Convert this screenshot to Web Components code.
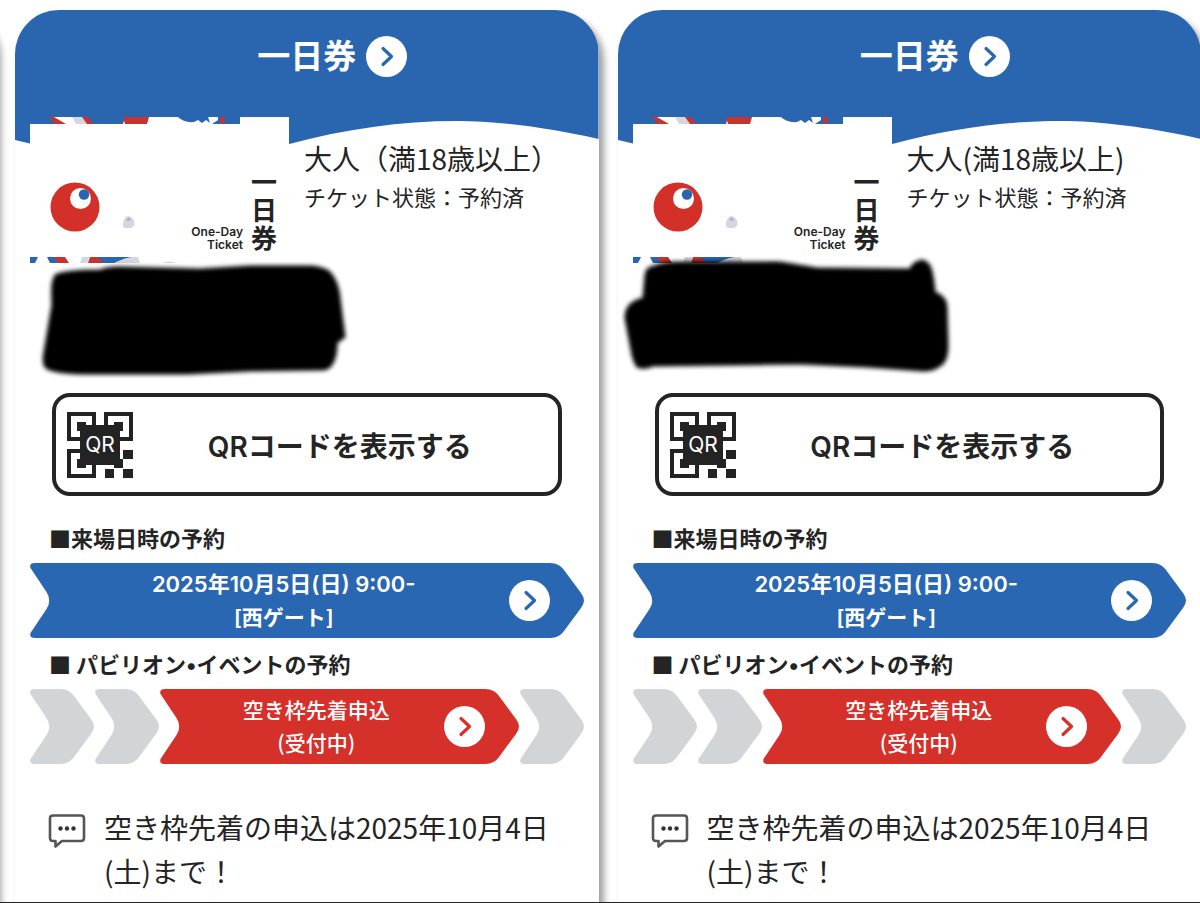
<!DOCTYPE html>
<html lang="ja">

<head>
    <meta charset="UTF-8">
    <meta name="viewport" content="width=device-width, initial-scale=1.0">
    <title>一日券</title>
    <style>
        body {
            background-color: hsl(0, 0%, 100%);
            color: hsl(0, 0%, 14%);
            font-family: 'Noto Sans CJK JP', sans-serif;
            margin: 0;
        }
    </style>
</head>

<body>
    <ticket-list>
        <ticket-card>
            <span slot="category">大人（満18歳以上）</span>
            <ink-mark slot="holder"
                d="M40 15Q50 10 85 10Q92 7 104 7L185 9L235 6H298Q314 8 318 16Q324 25 325 38L330 77L322 83Q322 96 318 103Q314 111 305 110L235 111L172 114H65Q34 113 30 107Q27 102 29 92L37 45Q36 25 38 20Z"></ink-mark>
            <span slot="note">空き枠先着の申込は2025年10月4日(土)まで！</span>
        </ticket-card>
        <ticket-card>
            <span slot="category">大人(満18歳以上)</span>
            <ink-mark slot="holder"
                d="M27 15Q28 7 36 6Q45 2 60 2H162L199 8L292 9Q294 2 304 0Q311 2 313 8Q316 18 317 32Q329 37 329 47L330 85Q330 102 322 106Q316 111 305 111L249 107L182 104L35 106Q26 110 19 107Q16 103 14 95L7 58Q7 42 25 38Z"></ink-mark>
            <span slot="note">空き枠先着の申込は2025年10月4日(土)まで！</span>
        </ticket-card>
    </ticket-list>

    <script>
        class TicketList extends HTMLElement {

            constructor() {
                super()
                this.shadow = this.attachShadow({ mode: 'open' })
            }

            connectedCallback() {
                this.render()
            }

            render() {
                this.shadow.innerHTML =
                    /*html*/
                    `
                    <style>
                        :host {
                            border-bottom: 1px solid hsl(0, 0%, 14%);
                            box-sizing: border-box;
                            display: flex;
                            min-height: 100vh;
                            overflow: hidden;
                            padding-top: 10px;
                        }

                        /* edge of the card that is scrolled out on the left */
                        .previous {
                            border-radius: 0 40px 0 0;
                            box-shadow: 5px 6px 7px hsla(0, 0%, 0%, 0.38);
                            flex: none;
                            margin-left: -44px;
                            width: 40px;
                        }

                        .cards {
                            display: grid;
                            flex: 1;
                            gap: 19px;
                            grid-template-columns: 1fr 1fr;
                            margin: 0 -1px 0 19px;
                        }
                    </style>

                    <div class="previous"></div>
                    <main class="cards"><slot></slot></main>
                    `
            }
        }

        class CircleArrow extends HTMLElement {

            constructor() {
                super()
                this.shadow = this.attachShadow({ mode: 'open' })
            }

            connectedCallback() {
                this.render()
            }

            render() {
                this.shadow.innerHTML =
                    /*html*/
                    `
                    <style>
                        :host {
                            display: block;
                            flex: none;
                            height: 41px;
                            width: 41px;
                        }

                        svg {
                            display: block;
                        }
                    </style>

                    <svg width="41" height="41" viewBox="0 0 41 41" aria-hidden="true">
                        <circle cx="20.5" cy="20.5" r="20.5" fill="#fff"/>
                        <path d="M17 12.5L25.5 20.5L17 28.5" fill="none" stroke="currentColor" stroke-width="3.2" stroke-linecap="round" stroke-linejoin="round"/>
                    </svg>
                    `
            }
        }

        class InkMark extends HTMLElement {

            constructor() {
                super()
                this.shadow = this.attachShadow({ mode: 'open' })
            }

            connectedCallback() {
                this.render()
            }

            render() {
                this.shadow.innerHTML =
                    /*html*/
                    `
                    <style>
                        :host {
                            display: block;
                        }

                        svg {
                            display: block;
                            filter: blur(2px);
                            overflow: visible;
                        }
                    </style>

                    <svg width="340" height="115" viewBox="0 0 340 115" aria-hidden="true">
                        <path d="${this.getAttribute('d')}" fill="#000" stroke="#000" stroke-opacity="0.5" stroke-width="2" stroke-linejoin="round"/>
                    </svg>
                    `
            }
        }

        class RibbonArrow extends HTMLElement {

            constructor() {
                super()
                this.shadow = this.attachShadow({ mode: 'open' })
            }

            connectedCallback() {
                this.render()
            }

            render() {
                const label = this.hasAttribute('step')
                    ? ''
                    : '<span class="label"><slot></slot></span><circle-arrow></circle-arrow>'
                const tag = this.hasAttribute('step') ? 'div' : 'button'

                this.shadow.innerHTML =
                    /*html*/
                    `
                    <style>
                        :host {
                            color: hsl(213, 62%, 43%);
                            display: block;
                            flex: 1;
                        }

                        :host([tone="red"]) {
                            color: hsl(2, 67%, 50%);
                        }

                        :host([step]) {
                            color: hsl(200, 7%, 83%);
                            flex: 0 0 64px;
                        }

                        .ribbon {
                            background: none;
                            border: 0;
                            color: inherit;
                            cursor: pointer;
                            display: flex;
                            font: inherit;
                            height: 75px;
                            padding: 0;
                            width: 100%;
                        }

                        :host([step]) .ribbon {
                            cursor: default;
                        }

                        svg {
                            display: block;
                            fill: currentColor;
                            flex: none;
                        }

                        .body {
                            align-items: center;
                            align-self: stretch;
                            background-color: currentColor;
                            display: flex;
                            flex: 1;
                            padding-left: 9px;
                        }

                        :host([step]) .body {
                            flex: none;
                            padding: 0;
                            width: 10px;
                        }

                        .label {
                            color: hsl(0, 0%, 100%);
                            flex: 1;
                            font-family: 'Inter', 'Noto Sans CJK JP', sans-serif;
                            font-size: 22px;
                            font-weight: 600;
                            line-height: 33px;
                            text-align: center;
                        }

                        ::slotted(.gate) {
                            font-size: 21px;
                        }

                        :host([tone="red"]) .label {
                            font-family: 'Noto Sans CJK JP', sans-serif;
                            font-size: 21px;
                            font-weight: 500;
                            padding-bottom: 2px;
                        }
                    </style>

                    <${tag} class="ribbon">
                        <svg width="20" height="75" viewBox="0 0 20 75" aria-hidden="true">
                            <path d="M20 0H5Q-1 0 .5 5L16.500 29Q22 37.500 16.500 46L.5 70Q-1 75 5 75H20Z"/>
                        </svg>
                        <span class="body">${label}</span>
                        <svg width="34" height="75" viewBox="2 0 34 75" aria-hidden="true">
                            <path d="M0 0H2C9 0 13 3 16 7L33 30Q36 34 36 37.500Q36 41 33 45L16 68C13 72 9 75 2 75H0Z"/>
                        </svg>
                    </${tag}>
                    `
            }
        }

        class TicketPicture extends HTMLElement {

            constructor() {
                super()
                this.shadow = this.attachShadow({ mode: 'open' })
            }

            connectedCallback() {
                this.render()
            }

            render() {
                this.shadow.innerHTML =
                    /*html*/
                    `
                    <style>
                        :host {
                            align-items: flex-end;
                            background-color: hsl(0, 0%, 100%);
                            box-sizing: border-box;
                            display: flex;
                            flex: none;
                            gap: 8px;
                            height: 146px;
                            justify-content: flex-end;
                            padding: 0 12px 12px 0;
                            position: relative;
                            width: 259px;
                        }

                        svg {
                            left: 0;
                            position: absolute;
                            top: 0;
                        }

                        .english {
                            font-family: 'Inter', sans-serif;
                            font-size: 12px;
                            font-weight: 600;
                            line-height: 13px;
                            text-align: right;
                        }

                        .name {
                            font-size: 26px;
                            font-weight: 700;
                            line-height: 28px;
                            width: 26px;
                        }
                    </style>

                    <svg width="259" height="146" viewBox="0 0 259 146" aria-hidden="true">
                        <g fill="#2a66b0">
                            <path d="M0 0H22L26 7H0ZM56 0H95L93 7H62ZM148 0H178L180 6L176 3L172 6L168 3L164 5Q154 6 148 0ZM182 7L188 3V0H210V7Z"/>
                            <path d="M0 140H8L5 146H0ZM17 140H25L29 146H20ZM66 140H104Q92 141 88 146H70Z"/>
                        </g>
                        <g fill="#c8332f">
                            <path d="M19 0H24L36 7H25ZM51 0H58L63 7H56ZM93 0H119L117 7H95ZM190 0H195L194 7H191Z"/>
                            <path d="M24 140H35L39 146H28ZM60 140H67L74 146H58Z"/>
                        </g>
                        <g fill="#d5d6de">
                            <path d="M42 0H52L57 7H46ZM52 140H60L57 146H50ZM104 140H108L110 146H84Q94 141 104 140ZM132 146Q139 143 146 146Z"/>
                            <path d="M98 99Q103 100 104.500 105Q105 111 99 111H95Q92 110 93 106Q94 100 98 99Z"/>
                        </g>
                        <path d="M96 103L99 100L101 103L99 104Z" fill="#aeb3c4"/>
                        <circle cx="45" cy="90" r="24.500" fill="#d4302a"/>
                        <circle cx="50.500" cy="81.500" r="10.500" fill="#fff"/>
                        <circle cx="54" cy="77.500" r="5.200" fill="#2a66b0"/>
                    </svg>
                    <span class="english">One-Day<br>Ticket</span>
                    <span class="name">一日券</span>
                    `
            }
        }

        class TicketCard extends HTMLElement {

            constructor() {
                super()
                this.shadow = this.attachShadow({ mode: 'open' })
            }

            connectedCallback() {
                this.render()
            }

            render() {
                this.shadow.innerHTML =
                    /*html*/
                    `
                    <style>
                        :host {
                            background-color: hsl(0, 0%, 100%);
                            border-radius: 44px 44px 0 0;
                            box-shadow: 5px 6px 7px hsla(0, 0%, 0%, 0.38);
                            display: block;
                            min-width: 0;
                            position: relative;
                        }

                        .hero {
                            border-radius: 44px 44px 0 0;
                            display: block;
                            height: 150px;
                            left: 0;
                            position: absolute;
                            top: 0;
                            width: 100%;
                        }

                        .content {
                            position: relative;
                        }

                        header {
                            align-items: start;
                            box-sizing: border-box;
                            column-gap: 10px;
                            display: grid;
                            grid-template-columns: 1fr auto 1fr;
                            height: 107px;
                            padding-top: 26px;
                        }

                        header h1 {
                            color: hsl(0, 0%, 100%);
                            font-size: 33px;
                            font-weight: 700;
                            grid-column: 2;
                            line-height: 36px;
                            margin: 0;
                        }

                        header a {
                            color: hsl(213, 62%, 43%);
                        }

                        .summary {
                            display: flex;
                            gap: 15px;
                            padding: 0 15px;
                        }

                        .summary p {
                            font-size: 22px;
                            line-height: 38px;
                            margin: 0;
                            white-space: nowrap;
                        }

                        .summary .category {
                            font-size: 28px;
                            padding-top: 22px;
                        }

                        .holder {
                            margin: -3px 0 18px;
                        }

                        .qr {
                            align-items: center;
                            background-color: hsl(0, 0%, 100%);
                            border: 4px solid hsl(0, 0%, 14%);
                            border-radius: 18px;
                            box-sizing: border-box;
                            color: inherit;
                            cursor: pointer;
                            display: flex;
                            font-family: 'Inter', 'Noto Sans CJK JP', sans-serif;
                            font-size: 28px;
                            font-weight: 600;
                            height: 103px;
                            margin: 0 37px;
                            padding: 0 11px;
                            width: calc(100% - 74px);
                        }

                        .qr span {
                            flex: 1;
                        }

                        h2 {
                            font-size: 22px;
                            font-weight: 700;
                            line-height: 32px;
                            margin: 0 0 10px;
                            padding: 9px 34px 0;
                        }

                        h2 span {
                            font-family: 'Inter', sans-serif;
                            line-height: 1;
                        }

                        .qr + h2 {
                            padding-top: 25px;
                        }

                        .steps {
                            display: flex;
                            gap: 1px;
                            padding: 0 15px;
                        }

                        .note {
                            display: flex;
                            font-size: 28px;
                            gap: 18px;
                            line-height: 44px;
                            margin: 41px 0 0;
                            padding: 0 15px 0 33px;
                        }

                        .note svg {
                            flex: none;
                            padding-top: 8px;
                        }
                    </style>

                    <svg class="hero" viewBox="0 0 583 150" preserveAspectRatio="none" aria-hidden="true">
                        <path d="M0 0H583V129C530 117 480 111 442 111C385 111 330 119 274 134Q140 165 0 130Z" fill="#2a66b0"/>
                    </svg>
                    <article class="content">
                        <header>
                            <h1>一日券</h1>
                            <a href="#" aria-label="一日券"><circle-arrow></circle-arrow></a>
                        </header>
                        <section class="summary">
                            <ticket-picture></ticket-picture>
                            <div>
                                <p class="category"><slot name="category"></slot></p>
                                <p>チケット状態：予約済</p>
                            </div>
                        </section>
                        <div class="holder"><slot name="holder"></slot></div>
                        <button class="qr">
                            <svg width="66" height="66" viewBox="0 0 66 66" aria-hidden="true">
                                <path d="M2 2H27V27H2ZM39 2H64V27H39ZM2 39H27V64H2Z" fill="none" stroke="#232323" stroke-width="4"/>
                                <path d="M13 13H53V53H13ZM10 10H19V19H10ZM47 10H56V19H47ZM10 47H19V56H10ZM47 47H56V56H47ZM56 38H66V47H56ZM38 57H47V66H38ZM56 57H66V66H56Z" fill="#232323"/>
                                <text x="33" y="40" fill="#fff" font-family="Inter, sans-serif" font-size="21" font-weight="400" text-anchor="middle">QR</text>
                            </svg>
                            <span>QRコードを表示する</span>
                        </button>
                        <h2>■来場日時の予約</h2>
                        <div class="steps">
                            <ribbon-arrow>2025年10月5日(日) 9:00-<br><span class="gate">[西ゲート]</span></ribbon-arrow>
                        </div>
                        <h2>■ パビリオン<span>•</span>イベントの予約</h2>
                        <div class="steps">
                            <ribbon-arrow step></ribbon-arrow>
                            <ribbon-arrow step></ribbon-arrow>
                            <ribbon-arrow tone="red">空き枠先着申込<br>(受付中)</ribbon-arrow>
                            <ribbon-arrow step></ribbon-arrow>
                        </div>
                        <p class="note">
                            <svg width="38" height="36" viewBox="0 0 38 36" aria-hidden="true">
                                <path d="M5 2.500H33Q36 2.500 36 5.500V25Q36 28 33 28H14L7.500 33.500V28H5Q2 28 2 25V5.500Q2 2.500 5 2.500Z" fill="none" stroke="#555" stroke-width="2.600" stroke-linejoin="round"/>
                                <g fill="#333"><circle cx="12.500" cy="15.500" r="2.200"/><circle cx="19" cy="15.500" r="2.200"/><circle cx="25.500" cy="15.500" r="2.200"/></g>
                            </svg>
                            <slot name="note"></slot>
                        </p>
                    </article>
                    `
            }
        }

        customElements.define('circle-arrow', CircleArrow);
        customElements.define('ink-mark', InkMark);
        customElements.define('ribbon-arrow', RibbonArrow);
        customElements.define('ticket-picture', TicketPicture);
        customElements.define('ticket-card', TicketCard);
        customElements.define('ticket-list', TicketList);
    </script>
</body>

</html>
